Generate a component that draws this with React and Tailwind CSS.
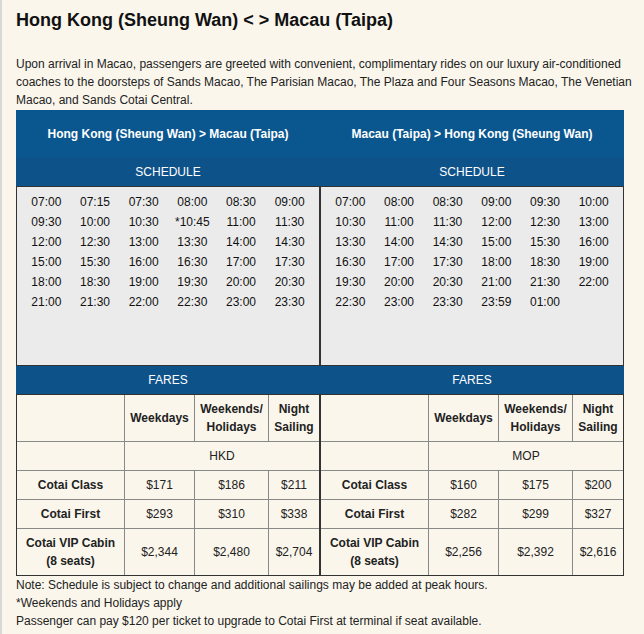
import React from 'react';

const routes = [
  {
    title: 'Hong Kong (Sheung Wan) > Macau (Taipa)',
    times: [
      '07:00', '07:15', '07:30', '08:00', '08:30', '09:00',
      '09:30', '10:00', '10:30', '*10:45', '11:00', '11:30',
      '12:00', '12:30', '13:00', '13:30', '14:00', '14:30',
      '15:00', '15:30', '16:00', '16:30', '17:00', '17:30',
      '18:00', '18:30', '19:00', '19:30', '20:00', '20:30',
      '21:00', '21:30', '22:00', '22:30', '23:00', '23:30',
    ],
    currency: 'HKD',
    fares: [
      { label: 'Cotai Class', values: ['$171', '$186', '$211'] },
      { label: 'Cotai First', values: ['$293', '$310', '$338'] },
      { label: 'Cotai VIP Cabin', sub: '(8 seats)', values: ['$2,344', '$2,480', '$2,704'] },
    ],
  },
  {
    title: 'Macau (Taipa) > Hong Kong (Sheung Wan)',
    times: [
      '07:00', '08:00', '08:30', '09:00', '09:30', '10:00',
      '10:30', '11:00', '11:30', '12:00', '12:30', '13:00',
      '13:30', '14:00', '14:30', '15:00', '15:30', '16:00',
      '16:30', '17:00', '17:30', '18:00', '18:30', '19:00',
      '19:30', '20:00', '20:30', '21:00', '21:30', '22:00',
      '22:30', '23:00', '23:30', '23:59', '01:00',
    ],
    currency: 'MOP',
    fares: [
      { label: 'Cotai Class', values: ['$160', '$175', '$200'] },
      { label: 'Cotai First', values: ['$282', '$299', '$327'] },
      { label: 'Cotai VIP Cabin', sub: '(8 seats)', values: ['$2,256', '$2,392', '$2,616'] },
    ],
  },
];

const Cell = ({ children, className = '' }) => (
  <div className={`bg-[#faf6ec] flex flex-col items-center justify-center text-center leading-[18px] ${className}`}>
    {children}
  </div>
);

const FareTable = ({ route }) => (
  <div className="border border-[#333]">
    <div className="grid grid-cols-[107px_69px_73px_50px] gap-px bg-[#888]">
      {/* cabecera */}
      <Cell className="h-[46px]" />
      <Cell className="h-[46px] font-bold">Weekdays</Cell>
      <Cell className="h-[46px] font-bold">Weekends/<br />Holidays</Cell>
      <Cell className="h-[46px] font-bold">Night<br />Sailing</Cell>
      <Cell className="h-[28px]" />
      <Cell className="h-[28px] col-span-3">{route.currency}</Cell>
      {route.fares.map((f) => (
        <React.Fragment key={f.label}>
          <Cell className={`${f.sub ? 'h-[46px]' : 'h-[28px]'} font-bold`}>
            <span>{f.label}</span>
            {f.sub && <span>{f.sub}</span>}
          </Cell>
          {f.values.map((v, i) => (
            <Cell key={i} className={f.sub ? 'h-[46px]' : 'h-[28px]'}>{v}</Cell>
          ))}
        </React.Fragment>
      ))}
    </div>
  </div>
);

export default function App() {
  return (
    <div className="min-h-screen bg-[#faf6ec] border-l-2 border-[#d8d8d8] pl-[14px] pr-2 text-[#222] font-['Liberation_Sans',Arial,sans-serif]">
      <h1 className="pt-2 text-[18px] leading-6 font-bold text-[#111]">
        Hong Kong (Sheung Wan) &lt; &gt; Macau (Taipa)
      </h1>
      <p className="mt-[23px] text-[12px] leading-[18px]">
        Upon arrival in Macao, passengers are greeted with convenient, complimentary rides on our luxury air-conditioned
        coaches to the doorsteps of Sands Macao, The Parisian Macao, The Plaza and Four Seasons Macao, The Venetian
        Macao, and Sands Cotai Central.
      </p>

      <div className="mt-px w-[608px] text-[12px]">
        <div className="grid grid-cols-2 h-[47px] bg-[#0a5790] text-white font-bold">
          {routes.map((r) => (
            <div key={r.title} className="flex items-center justify-center">{r.title}</div>
          ))}
        </div>
        <div className="grid grid-cols-2 h-[29px] bg-[#0e528a] text-white">
          <div className="flex items-center justify-center">SCHEDULE</div>
          <div className="flex items-center justify-center">SCHEDULE</div>
        </div>
        <div className="grid grid-cols-2">
          {routes.map((r) => (
            <div key={r.title} className="h-[180px] border border-[#333] bg-[#ebebeb] px-[5px] pt-[5px]">
              <div className="grid grid-cols-6">
                {r.times.map((t, i) => (
                  <div key={i} className="h-5 leading-5 text-center text-[#111]">{t}</div>
                ))}
              </div>
            </div>
          ))}
        </div>
        <div className="grid grid-cols-2 h-[28px] bg-[#0e528a] text-white">
          <div className="flex items-center justify-center">FARES</div>
          <div className="flex items-center justify-center">FARES</div>
        </div>
        <div className="grid grid-cols-2">
          {routes.map((r) => (
            <FareTable key={r.title} route={r} />
          ))}
        </div>
      </div>

      <div className="text-[12px] leading-[18px]">
        <p>Note: Schedule is subject to change and additional sailings may be added at peak hours.</p>
        <p>*Weekends and Holidays apply</p>
        <p>Passenger can pay $120 per ticket to upgrade to Cotai First at terminal if seat available.</p>
      </div>
    </div>
  );
}
